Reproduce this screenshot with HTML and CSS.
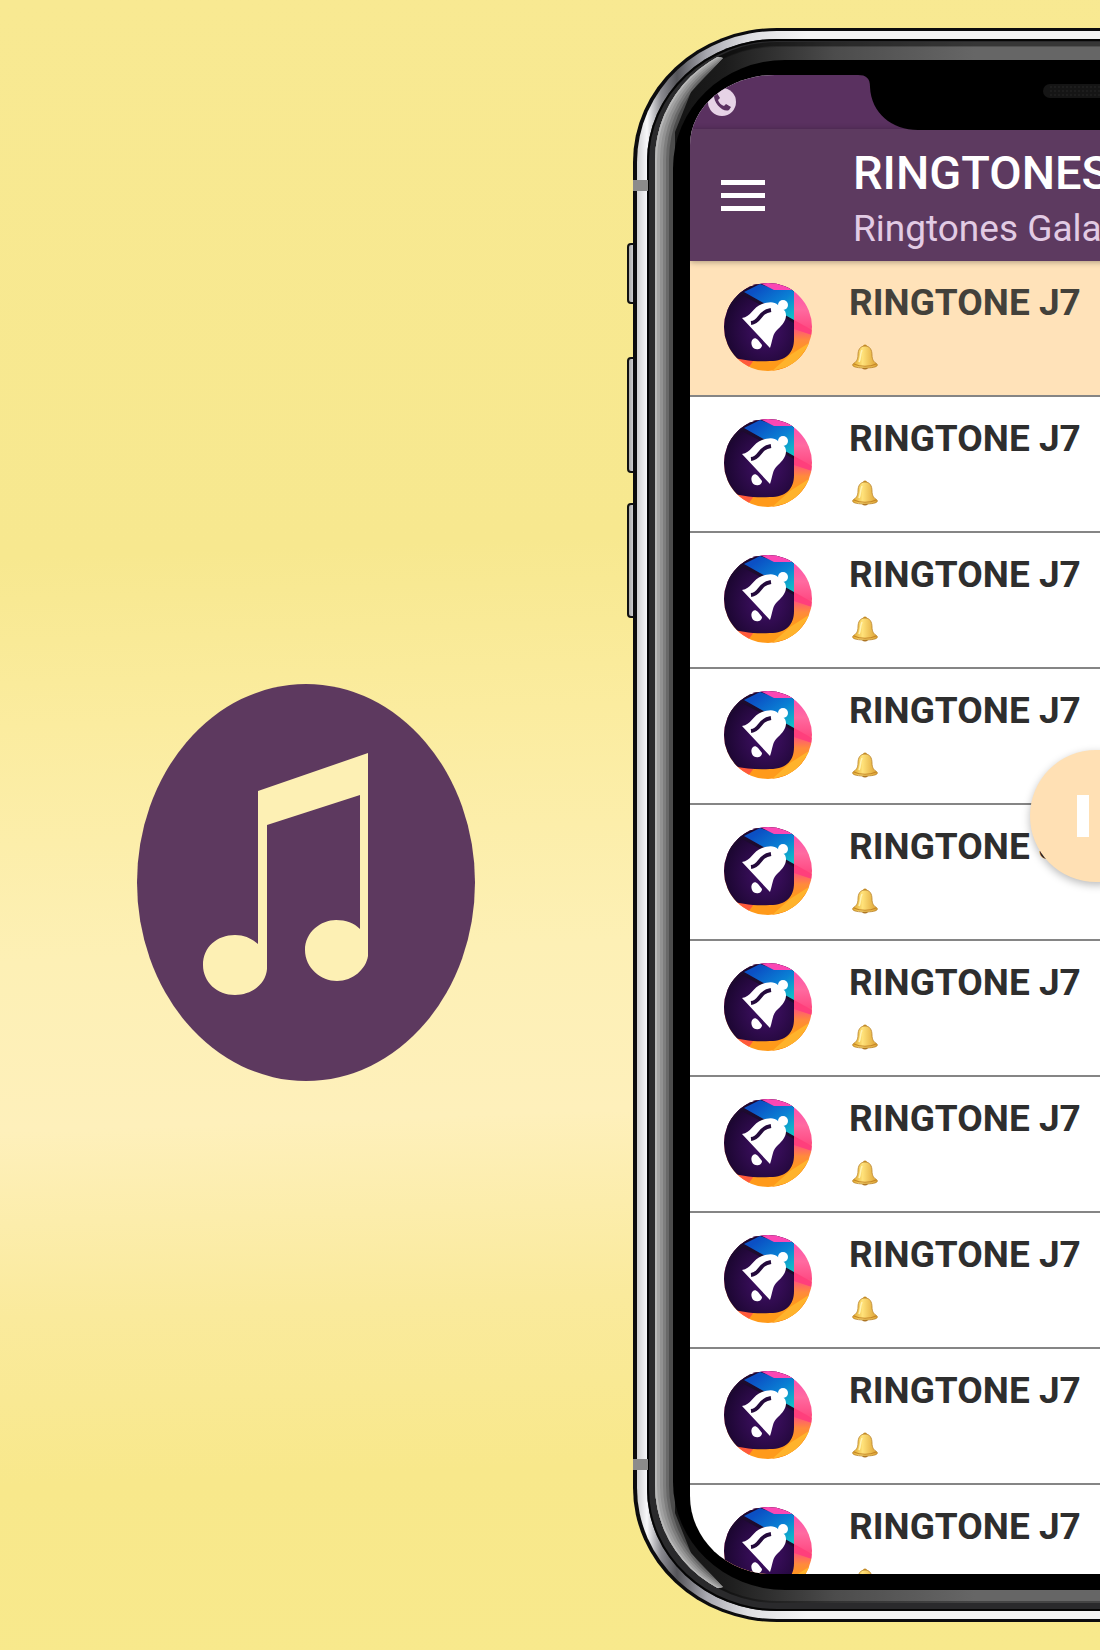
FILE: index.html
```html
<!DOCTYPE html>
<html lang="en">
<head>
  <meta charset="UTF-8">
  <meta name="viewport" content="width=device-width, initial-scale=1.0">
  <title>Ringtones</title>
  <link rel="stylesheet" href="styles.css">
</head>
<body>
  <!-- Shared drawings -->
  <svg class="sprites" aria-hidden="true">
    <defs>
      <linearGradient id="blue" x1="0" y1="0" x2="1" y2="1">
        <stop offset="0.2" stop-color="#0b50c4"/>
        <stop offset="0.6" stop-color="#0a7fd4"/>
        <stop offset="1" stop-color="#14c8c4"/>
      </linearGradient>
      <linearGradient id="sunset" x1="0" y1="0" x2="0" y2="1">
        <stop offset="0" stop-color="#fb47b4"/>
        <stop offset="0.3" stop-color="#ff6aa0"/>
        <stop offset="0.5" stop-color="#ff4c84"/>
        <stop offset="0.65" stop-color="#ff8a3c"/>
        <stop offset="0.8" stop-color="#ff9a1a"/>
      </linearGradient>
      <radialGradient id="night" cx="0.6" cy="0.6" r="0.6">
        <stop offset="0" stop-color="#43106a"/>
        <stop offset="1" stop-color="#1b0630"/>
      </radialGradient>
      <linearGradient id="gold" x1="0" y1="0" x2="1" y2="0">
        <stop offset="0" stop-color="#e0a62c"/>
        <stop offset="0.4" stop-color="#ffe27a"/>
        <stop offset="1" stop-color="#dc9f30"/>
      </linearGradient>
      <clipPath id="disc"><circle cx="44" cy="44" r="44"/></clipPath>
    </defs>
    <symbol id="cover" viewBox="0 0 88 88">
      <g clip-path="url(#disc)">
        <rect width="88" height="88" fill="url(#sunset)"/>
        <path d="M70 37L88 47V52L70 46Z" fill="#ff3f7c"/>
        <path d="M88 62L48 88H88Z" fill="#ff8410"/>
        <path d="M88 58L66 72L48 88L70 82Z" fill="#ffb32c"/>
        <path d="M0 72L30 77L22 88H0Z" fill="#ff5a3c"/>
        <path d="M0 0H70V56C70 70 62 78 46 78C30 79 18 77 0 73Z" fill="url(#night)"/>
        <path d="M0 0H36L20 9L70 37V40L18 12L0 30Z" fill="#1d0b2e"/>
        <path d="M20 9L36 1L50 6H70V37Z" fill="url(#blue)"/>
        <path d="M36 0H80L70 7H50Z" fill="#fb47b4"/>
      </g>
      <path d="M18 35C27 34 29 24 38 21C44 19 50 18 54 22L61 28C64 34 60 41 54 46C48 51 49 57 46 65Z" fill="#fff"/>
      <circle cx="59" cy="22" r="5" fill="#fff"/>
      <path d="M27 40C37 39 34 29 47 27" fill="none" stroke="#240a3c" stroke-width="4"/>
      <path d="M29 56C32 54 34 57 38 62C38 67 30 68 28 63C27 60 27 58 29 56Z" fill="#fff"/>
    </symbol>
    <symbol id="bell" viewBox="0 0 26 26">
      <circle cx="13" cy="2.5" r="2" fill="#c98d25"/>
      <ellipse cx="13" cy="23" rx="3" ry="2.5" fill="#a86f22"/>
      <path d="M13 2C18 2 20 6 20 11C20 16 22 18 25 20C27 23 20 24 13 24C6 24-1 23 1 20C4 18 6 16 6 11C6 6 8 2 13 2Z" fill="url(#gold)" stroke="#b9832a" stroke-width="0.8"/>
      <path d="M2 20C8 23 18 23 24 20" fill="none" stroke="#c48628" stroke-width="1.2"/>
      <path d="M10 6C8 10 9 14 7 18" fill="none" stroke="#fff3b4" stroke-width="1.6"/>
    </symbol>
  </svg>

  <main class="stage">
    <div class="brand">
      <svg class="brand-logo" viewBox="0 0 338 397" role="img" aria-label="Music">
        <ellipse cx="169" cy="198.500" rx="169" ry="198.500" fill="#5d395f"/>
        <path d="M121 107L231 69V272C229 285 216 297 200 297C184 297 168 284 168 266C168 248 184 236 199 236C209 236 217 239 223 245V111L130 141V285C129 299 116 311 98 311C80 311 66 298 66 281C66 263 80 251 98 251C108 251 115 255 121 260Z" fill="#fdf0b4"/>
      </svg>
    </div>

    <div class="phone">
      <span class="side-key key-mute"></span>
      <span class="side-key key-up"></span>
      <span class="side-key key-down"></span>
      <div class="rim">
        <div class="rail">
          <div class="band">
            <div class="glass">
              <div class="bezel">
                <div class="screen">
                  <div class="status-bar">
                    <svg class="call-icon" viewBox="0 0 28 28" aria-hidden="true">
                      <circle cx="14" cy="14" r="14" fill="#e6d3e6"/>
                      <path d="M6 6L9 5L12 10L10 12C11 15 13 17 16 18L18 16L23 19L21 22C16 25 5 16 6 6Z" fill="#5a3160"/>
                    </svg>
                  </div>
                  <header class="app-bar">
                    <button class="menu-button" type="button" aria-label="Menu">
                      <span></span><span></span><span></span>
                    </button>
                    <div class="app-titles">
                      <h1>RINGTONES</h1>
                      <p>Ringtones Gala</p>
                    </div>
                  </header>
                  <ul class="tones">
                    <li class="tone active">
                      <svg class="cover"><use href="#cover"/></svg>
                      <div class="tone-text"><h2>RINGTONE J7</h2><svg class="bell"><use href="#bell"/></svg></div>
                    </li>
                    <li class="tone">
                      <svg class="cover"><use href="#cover"/></svg>
                      <div class="tone-text"><h2>RINGTONE J7</h2><svg class="bell"><use href="#bell"/></svg></div>
                    </li>
                    <li class="tone">
                      <svg class="cover"><use href="#cover"/></svg>
                      <div class="tone-text"><h2>RINGTONE J7</h2><svg class="bell"><use href="#bell"/></svg></div>
                    </li>
                    <li class="tone">
                      <svg class="cover"><use href="#cover"/></svg>
                      <div class="tone-text"><h2>RINGTONE J7</h2><svg class="bell"><use href="#bell"/></svg></div>
                    </li>
                    <li class="tone">
                      <svg class="cover"><use href="#cover"/></svg>
                      <div class="tone-text"><h2>RINGTONE J7</h2><svg class="bell"><use href="#bell"/></svg></div>
                    </li>
                    <li class="tone">
                      <svg class="cover"><use href="#cover"/></svg>
                      <div class="tone-text"><h2>RINGTONE J7</h2><svg class="bell"><use href="#bell"/></svg></div>
                    </li>
                    <li class="tone">
                      <svg class="cover"><use href="#cover"/></svg>
                      <div class="tone-text"><h2>RINGTONE J7</h2><svg class="bell"><use href="#bell"/></svg></div>
                    </li>
                    <li class="tone">
                      <svg class="cover"><use href="#cover"/></svg>
                      <div class="tone-text"><h2>RINGTONE J7</h2><svg class="bell"><use href="#bell"/></svg></div>
                    </li>
                    <li class="tone">
                      <svg class="cover"><use href="#cover"/></svg>
                      <div class="tone-text"><h2>RINGTONE J7</h2><svg class="bell"><use href="#bell"/></svg></div>
                    </li>
                    <li class="tone">
                      <svg class="cover"><use href="#cover"/></svg>
                      <div class="tone-text"><h2>RINGTONE J7</h2><svg class="bell"><use href="#bell"/></svg></div>
                    </li>
                  </ul>
                  <!-- Notch with the earpiece -->
                  <svg class="notch" viewBox="0 0 476 55" aria-hidden="true">
                    <path d="M0 0C8 0 12 3 12 12C13 38 34 55 60 55H416C442 55 463 38 464 12C464 3 468 0 476 0Z" fill="#000"/>
                    <rect x="185" y="9" width="106" height="14" rx="7" fill="#151515"/>
                    <path d="M192 12H284M192 16H284M192 20H284" stroke="#262626" stroke-dasharray="2 2"/>
                  </svg>
                  <button class="pause-button" type="button" aria-label="Pause">
                    <span></span><span></span>
                  </button>
                </div>
              </div>
            </div>
          </div>
        </div>
      </div>
      <span class="antenna antenna-top"></span>
      <span class="antenna antenna-bottom"></span>
    </div>
  </main>
</body>
</html>
```

FILE: styles.css
```css
* {
  box-sizing: border-box;
}
body {
  margin: 0;
  font-family: Roboto, "Liberation Sans", sans-serif;
  background: #f8e98f;
}
h1, h2, p, ul {
  margin: 0;
  padding: 0;
}
button {
  border: none;
  padding: 0;
  cursor: pointer;
}
.sprites {
  position: absolute;
  width: 0;
  height: 0;
}
.stage {
  display: grid;
  grid-template-columns: minmax(0, 633fr) minmax(0, 467fr);
  min-height: 100vh;
  overflow: hidden;
  background: linear-gradient(178deg, #f8e992 0%, #f7e88f 33%, #fbec9f 43%, #fdf0b5 57%, #fef0bb 67%, #faea9c 78%, #f8e88b 88%, #f8e98c 100%);
}

/* Logo */
.brand {
  display: flex;
  justify-content: center;
  align-items: flex-start;
  padding: 684px 22px 0 0;
}
.brand-logo {
  width: 338px;
  height: 397px;
}

/* Phone body, one box for each layer of the frame */
.phone {
  position: relative;
  width: 926px;
  margin: 28px 0;
}
.rim {
  position: relative;
  padding: 3px 4px;
  background: #0c0c0e;
  border-radius: 144px / 134px;
}
.rail {
  padding: 8px 10px;
  border-radius: 140px / 131px;
  background: linear-gradient(to right, #d0d0d2 0, #f8f8fa 10px, #8a8a90 24px, #55555a 40px, #a8a8b0 70px, #dedee2 110px, #f4f4f4 170px);
}
.band {
  padding: 3px 8px 8px;
  border-radius: 130px / 122px;
  background: #2a2a2c;
  box-shadow: inset 0 0 0 2px #050505;
}
.glass {
  position: relative;
  padding: 18px;
  padding-bottom: 13px;
  border-radius: 122px / 118px;
  background: linear-gradient(to right, #111 0, #1c1c1c 70px, #4c4c4c 180px, #666 320px);
  box-shadow: inset 0 1px 0 3px #00000055, inset 0 5px 0 #00000033;
}
/* Bright reflection along the left side, cut off in the corners */
.glass::before {
  content: "";
  position: absolute;
  inset: 0;
  border-radius: inherit;
  box-shadow: inset 2px 0 0 #b8b8b8, inset 5px 0 0 #a2a2a2, inset 8px 0 0 #929292, inset 11px 0 0 #7e7e7e, inset 14px 0 0 #686868, inset 24px 0 0 #4c4c4c;
  clip-path: polygon(0 0, 68px 16px, 36px 50px, 20px 90px, 20px calc(100% - 90px), 36px calc(100% - 50px), 68px calc(100% - 16px), 0 100%);
}
.bezel {
  position: relative;
  padding: 15px 17px 16px;
  border-radius: 112px / 108px;
  background: #000;
}
.screen {
  position: relative;
  height: 1499px;
  overflow: hidden;
  border-radius: 85px 85px 82px 82px / 70px 70px 78px 78px;
  background: #fff;
}
.side-key {
  position: absolute;
  left: -6px;
  width: 12px;
  border: 2px solid #111;
  border-radius: 4px;
  background: linear-gradient(to right, #aaa, #f0f0f4);
}
.key-mute {
  top: 215px;
  height: 61px;
}
.key-up {
  top: 329px;
  height: 116px;
}
.key-down {
  top: 475px;
  height: 115px;
}
.antenna {
  position: absolute;
  left: 0;
  width: 15px;
  height: 11px;
  background: #8b8b8b;
}
.antenna-top {
  top: 152px;
}
.antenna-bottom {
  bottom: 152px;
}

/* App */
.status-bar {
  height: 54px;
  padding: 13px 18px;
  background: #5a3160;
}
.call-icon {
  display: block;
  width: 28px;
  height: 28px;
}
.app-bar {
  position: relative;
  display: flex;
  align-items: center;
  gap: 88px;
  height: 132px;
  padding: 0 31px;
  background: #5d3a60;
  box-shadow: 0 1px 6px #00000055;
}
.menu-button {
  display: flex;
  flex-direction: column;
  gap: 8px;
  width: 44px;
  background: none;
}
.menu-button span {
  height: 5px;
  background: #fff;
}
.app-titles {
  padding-top: 12px;
  white-space: nowrap;
}
.app-titles h1 {
  font-size: 47px;
  font-weight: 500;
  line-height: 56px;
  color: #fff;
}
.app-titles p {
  font-size: 37px;
  line-height: 56px;
  color: #e2cbe4;
}
.tones {
  list-style: none;
}
.tone {
  display: flex;
  gap: 37px;
  height: 136px;
  padding: 22px 34px;
  border-bottom: 2px solid #858585;
}
.tone.active {
  background: #ffe2b9;
}
.cover {
  width: 88px;
  height: 88px;
}
.tone-text h2 {
  font-size: 37px;
  font-weight: 700;
  line-height: 40px;
  color: #2e2e2e;
}
.active h2 {
  color: #43413b;
}
.bell {
  display: block;
  width: 26px;
  height: 26px;
  margin: 21px 3px;
}
.notch {
  position: absolute;
  top: 0;
  left: 50%;
  width: 476px;
  height: 55px;
  transform: translateX(-50%);
}
.pause-button {
  position: absolute;
  top: 675px;
  left: 50%;
  display: flex;
  justify-content: center;
  align-items: center;
  gap: 14px;
  width: 132px;
  height: 132px;
  border-radius: 50%;
  background: #ffe0b4;
  box-shadow: 0 3px 8px #00000044;
  transform: translateX(-50%);
}
.pause-button span {
  width: 12px;
  height: 42px;
  background: #fff;
}
```
